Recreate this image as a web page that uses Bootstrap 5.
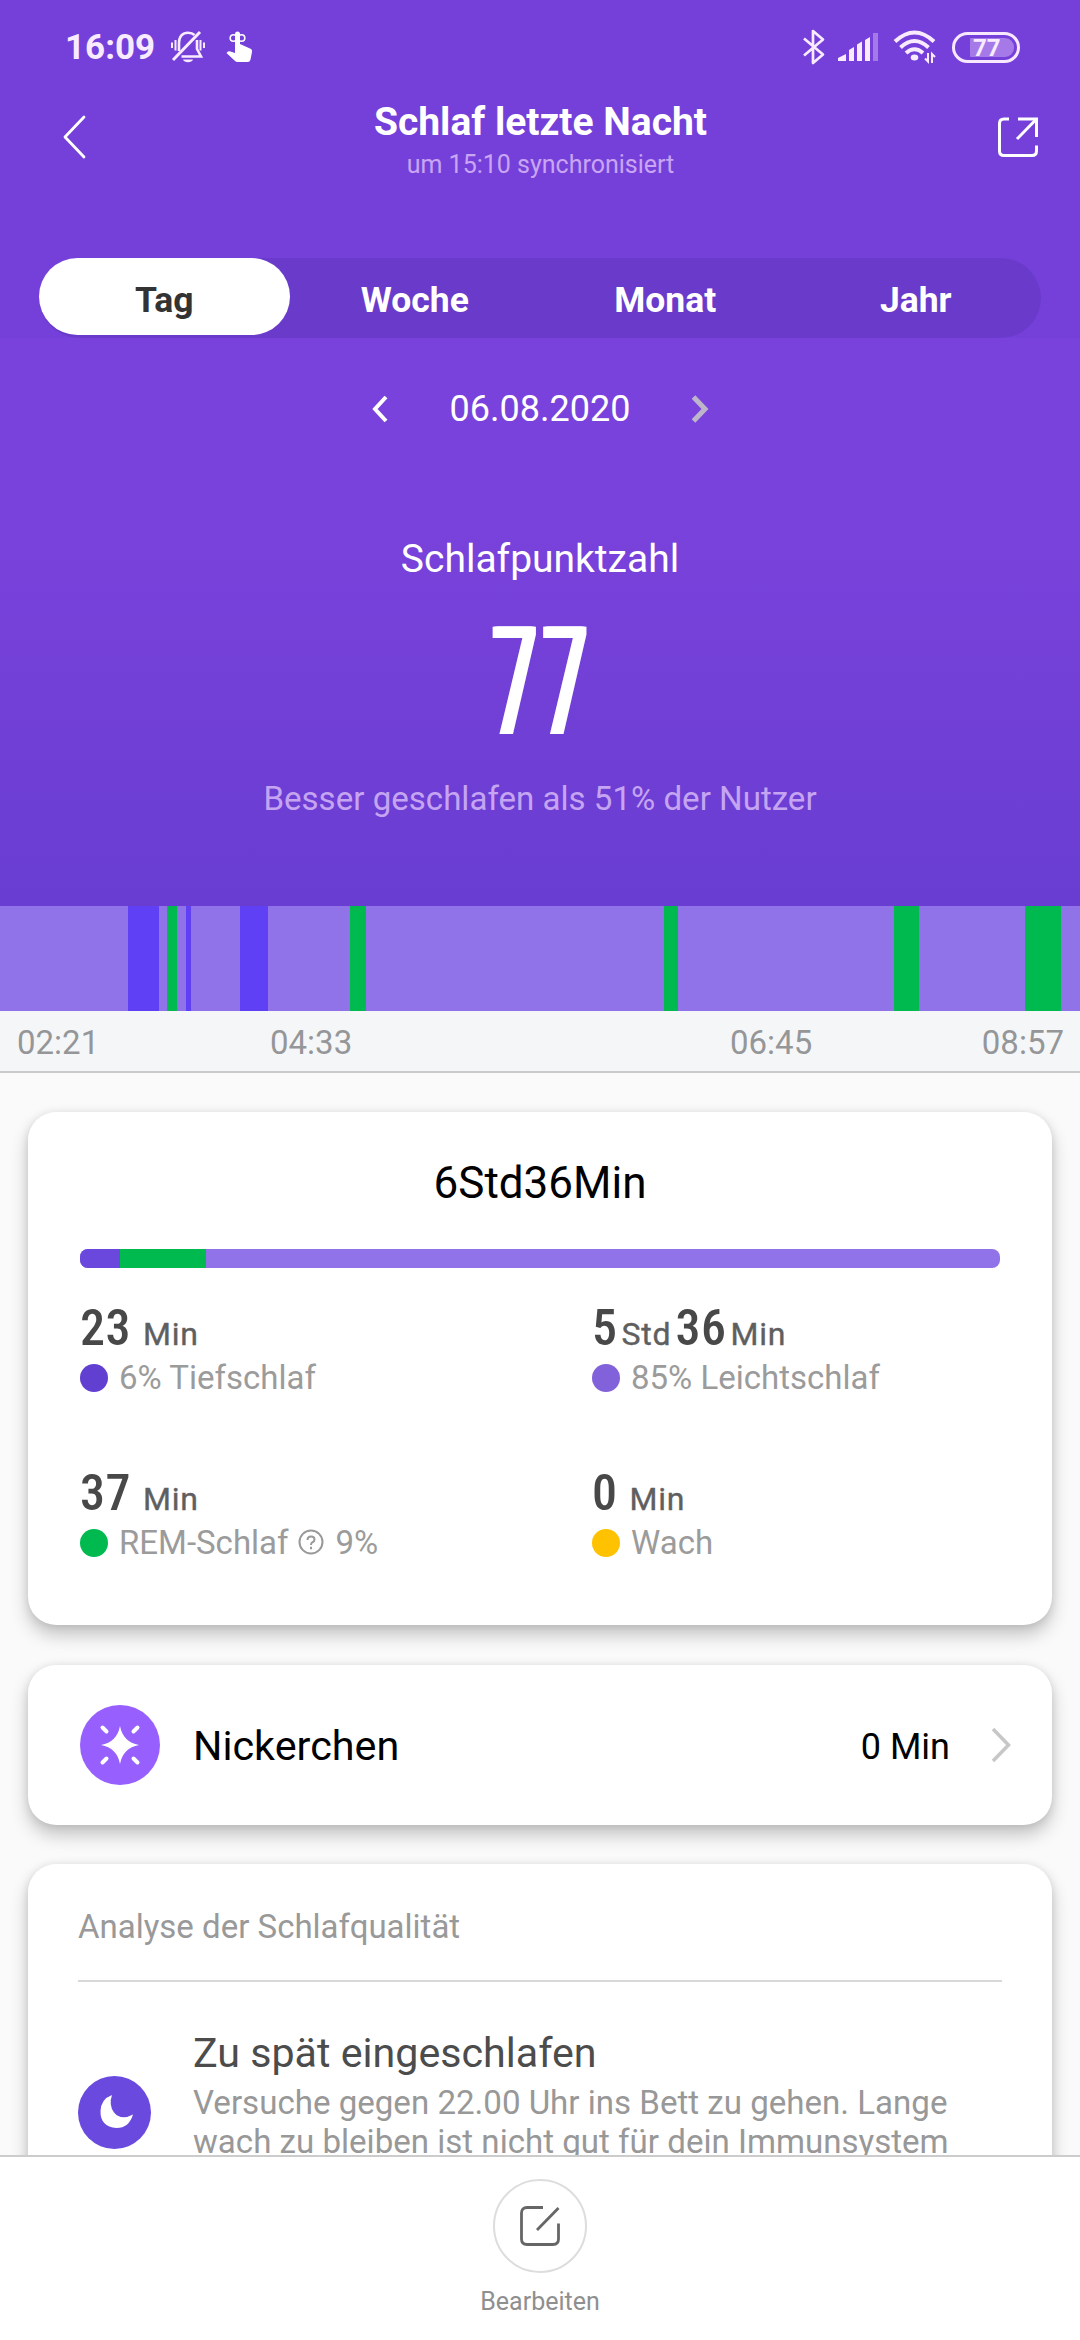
<!DOCTYPE html>
<html lang="de">
<head>
<meta charset="utf-8">
<meta name="viewport" content="width=device-width, initial-scale=1">
<title>Schlaf letzte Nacht</title>
<link href="https://cdn.jsdelivr.net/npm/bootstrap@5.3.0/dist/css/bootstrap.min.css" rel="stylesheet">
<style>
  body { font-family: Roboto, "Liberation Sans", sans-serif; font-size: 33px; background: #fafafa; color: #000; }
  .screen { width: 1080px; height: 2340px; }
  svg { display: block; flex: none; }

  /* Purple header */
  .hero { height: 906px; color: #fff; background: linear-gradient(#7540d9 0 338px, #7a42dc 338px, #7a42dc 500px, #693dd1 906px); }
  .statusbar { height: 94px; padding: 0 60px 0 65px; color: #f8ebff; }
  .clock { font-size: 35px; font-weight: 700; line-height: 94px; margin-right: 16px; padding-top: 1px; }
  .battery { width: 68px; height: 31px; border: 3px solid #f8e8ff; border-radius: 16px; padding: 3px; margin-left: 15px; }
  .battery-level { width: 44px; height: 19px; border-radius: 1px 9px 9px 1px; background: #a57ae8; font-size: 24px; font-weight: 700; line-height: 20px; padding-left: 3px; }
  .appbar { height: 92px; padding: 0 42px 0 62px; }
  .appbar svg { margin-bottom: 7px; }
  .app-heading { margin-right: 19px; padding-top: 1px; }
  .app-title { font-size: 39px; font-weight: 700; line-height: 48px; margin: 0; }
  .app-sub { font-size: 25px; line-height: 38px; color: #c9a5f3; }
  .period { margin: 72px 39px 0; height: 80px; border-radius: 40px; background: #6a3bca; }
  .period .nav-link { height: 77px; padding: 4px 0 0; border-radius: 39px; font-size: 35.5px; font-weight: 700; line-height: 77px; color: #fff; }
  .period .nav-link.active { background: #fff; color: #333; }
  .date-row { height: 60px; margin-top: 41px; gap: 61px; font-size: 36px; line-height: 60px; }
  .score-title { margin-top: 90px; font-size: 39px; line-height: 60px; }
  .score { margin-top: 19px; font-family: "Roboto Condensed", Roboto, sans-serif; font-size: 150px; font-weight: 400; line-height: 150px; transform: scaleX(.625); letter-spacing: 7px; text-indent: 6px; text-shadow: 2px 0, -2px 0, 4px 0, -4px 0; }
  .score-note { margin-top: 16px; font-size: 33.1px; line-height: 50px; color: #c5a5f2; }

  /* Sleep phase timeline */
  .timeline { height: 105px; background: #9073e9; }
  .deep { background: #5f40f5; }
  .rem { background: #00ba50; }
  .axis { height: 62px; background: #f5f6f8; border-bottom: 2px solid #c9cacc; color: #959698; line-height: 60px; padding: 2px 16px 0 17px; }
  .axis span:nth-child(1) { width: 253px; }
  .axis span:nth-child(2) { width: 460px; }

  /* Cards */
  .panel { width: 1024px; margin: 0 auto; background: #fff; border: 0; border-radius: 28px; box-shadow: 0 10px 18px rgba(0,0,0,.22), 0 1px 8px rgba(0,0,0,.1); }
  .summary { height: 513px; margin-top: 39px; padding: 40px 52px 0; }
  .total { font-size: 44px; line-height: 62px; height: 60px; text-align: center; }
  .phasebar { height: 19px; margin-top: 37px; border-radius: 8px; background: #9073e9; }
  .phasebar .deep { background: #6b48dd; }
  .stats { margin-top: 30px; }
  .stat { width: 512px; height: 165px; }
  .amount { height: 57px; line-height: 60px; color: #484848; font-family: "Roboto Condensed", Roboto, sans-serif; font-size: 50px; font-weight: 500; letter-spacing: .5px; white-space: pre; }
  .amount .unit { font-family: Roboto, sans-serif; font-size: 32px; font-weight: 400; letter-spacing: .8px; color: #5f5f5f; -webkit-text-stroke: .4px; line-height: 1; }
  .legend { height: 33px; margin-top: 6px; line-height: 33px; color: #9b9b9b; }
  .dot { width: 28px; height: 28px; border-radius: 50%; margin-right: 11px; }
  .nap { height: 160px; margin-top: 40px; padding: 0 41px 0 52px; }
  .nap-title { font-size: 41.3px; margin-left: 33px; padding-top: 3px; }
  .nap-value { font-size: 36px; margin-right: 41px; padding-top: 3px; }
  .quality { height: 340px; margin-top: 39px; padding: 35px 50px 0; border-radius: 28px 28px 0 0; }
  .quality-title { height: 81px; line-height: 55px; color: #999; }
  .advice { border-top: 2px solid #d8d8d8; padding-top: 46px; }
  .advice-icon { margin: 48px 42px 0 0; }
  .advice-title { font-size: 41.2px; line-height: 50px; color: #4c4c4c; }
  .advice-text { font-size: 33.1px; line-height: 39px; color: #989898; white-space: nowrap; padding-top: 5px; }

  /* Bottom action */
  .bottombar { height: 185px; background: #fff; border-top: 2px solid #ccc; padding-top: 22px; }
  .round-btn { width: 94px; height: 94px; border: 2px solid #ddd; border-radius: 50%; }
  .btn-label { font-size: 25px; line-height: 34px; margin-top: 12px; color: #8f8f8f; }
</style>
</head>
<body>
<div class="screen d-flex flex-column overflow-hidden">
  <header class="hero flex-shrink-0 text-center">
    <div class="statusbar d-flex align-items-center justify-content-between">
      <div class="d-flex align-items-center">
        <span class="clock">16:09</span>
        <svg width="34" height="34" viewBox="0 0 34 34" fill="none" stroke="#f8ebff" stroke-width="2.6">
          <path d="M8 21V13C8 6.500 11.500 2.800 17 2.800C19.500 2.800 22 3.500 23.500 5M26 10V19L30 26.500H10.500"/>
          <path d="M2 30L29 2" stroke-width="3"/>
          <path d="M12 29.500H22C21 33 13 33 12 29.500Z" fill="#f8ebff" stroke="none"/>
          <path d="M1 12.500V18M4.500 10V20.500M29.500 10V20.500M33 12.500V18" stroke-width="2"/>
        </svg>
        <svg class="ms-3" width="36" height="34" viewBox="0 0 36 34">
          <circle cx="12.500" cy="8" r="3.300" fill="none" stroke="#fff" stroke-width="1.600"/>
          <circle cx="20.500" cy="8" r="3.300" fill="none" stroke="#fff" stroke-width="1.600"/>
          <path fill="#fff" d="M14 4a2.500 2.500 0 0 1 5 0V14L29 18.500Q31.500 19.500 31 22L29.500 29.500Q29 32 26.500 32H17Q15 32 13.500 30.500L5.500 23L7 21.500Q8 21 9.500 21.500L14 23Z"/>
        </svg>
      </div>
      <div class="d-flex align-items-center">
        <svg width="22" height="36" viewBox="0 0 22 36" fill="none" stroke="#f8ebff" stroke-width="2.700" stroke-linejoin="round"><path d="M1 9.500L20 25.500L10 34V2L20 10.500L1 26.500"/></svg>
        <svg class="ms-2" width="60" height="34" viewBox="0 0 60 34"><g transform="translate(5 0)" fill="#f8ebff"><path d="M0 28L8 24V31H0ZM11 20L16 17V31H11ZM19 14.500L24 11.500V31H19ZM27 10L32 7V31H27Z"/><path fill="#a57ae8" d="M35 3H40V31H35Z"/></g></svg>
        <svg width="44" height="36" viewBox="0 0 44 36" fill="none" stroke="#f8ebff" stroke-width="4">
          <path d="M2 12.500Q21.500 -5.500 41 12.500M7.500 18.500Q21.500 5.500 35.500 18.500M13 24Q21.500 16.500 30 24"/>
          <ellipse cx="21.500" cy="28.500" rx="3.800" ry="3" fill="#f8ebff" stroke="none"/>
          <path d="M35 24V32.500L32 29.500M39 34V25L42 28" stroke-width="2"/>
        </svg>
        <div class="battery d-flex justify-content-end"><div class="battery-level text-start">77</div></div>
      </div>
    </div>
    <div class="appbar d-flex align-items-center justify-content-between">
      <svg width="40" height="44" viewBox="0 0 40 44" fill="none" stroke="#fff" stroke-width="2.800" stroke-linecap="round" stroke-linejoin="round"><path d="M22 2L3 22L22 42"/></svg>
      <div class="app-heading">
        <h1 class="app-title">Schlaf letzte Nacht</h1>
        <div class="app-sub">um 15:10 synchronisiert</div>
      </div>
      <svg width="40" height="40" viewBox="0 0 40 40" fill="none" stroke="#fff" stroke-width="3"><path d="M11 2H6Q1.500 2 1.500 6.500V34Q1.500 38.500 6 38.500H34Q38.500 38.500 38.500 34V28.500M20 2H38.500V20"/><path d="M38 2.500L19 22"/></svg>
    </div>
    <nav class="period nav nav-pills nav-fill">
      <div class="nav-item w-25"><a class="nav-link active">Tag</a></div>
      <div class="nav-item w-25"><a class="nav-link">Woche</a></div>
      <div class="nav-item w-25"><a class="nav-link">Monat</a></div>
      <div class="nav-item w-25"><a class="nav-link">Jahr</a></div>
    </nav>
    <div class="date-row d-flex align-items-center justify-content-center">
      <svg width="18" height="28" viewBox="0 0 18 28" fill="none" stroke="#fff" stroke-width="4"><path d="M15 2L4 14L15 26"/></svg>
      <span>06.08.2020</span>
      <svg width="18" height="28" viewBox="0 0 18 28" fill="none" stroke="#bdb5c9" stroke-width="5"><path d="M2.500 2L14 14L2.500 26"/></svg>
    </div>
    <div class="score-title">Schlafpunktzahl</div>
    <div class="score">77</div>
    <div class="score-note">Besser geschlafen als 51% der Nutzer</div>
  </header>

  <div class="timeline d-flex flex-shrink-0">
    <div class="deep" style="width:31px;margin-left:128px"></div>
    <div class="rem" style="width:10px;margin-left:8px"></div>
    <div class="deep" style="width:5px;margin-left:9px"></div>
    <div class="deep" style="width:28px;margin-left:49px"></div>
    <div class="rem" style="width:16px;margin-left:82px"></div>
    <div class="rem" style="width:14px;margin-left:298px"></div>
    <div class="rem" style="width:25px;margin-left:216px"></div>
    <div class="rem" style="width:36px;margin-left:106px"></div>
  </div>
  <div class="axis d-flex flex-shrink-0">
    <span>02:21</span><span>04:33</span><span>06:45</span><span class="ms-auto">08:57</span>
  </div>

  <main class="flex-grow-1 overflow-hidden">
    <section class="panel summary">
      <div class="total">6Std36Min</div>
      <div class="phasebar d-flex overflow-hidden">
        <div class="deep" style="width:40px"></div>
        <div class="rem" style="width:86px"></div>
      </div>
      <div class="stats d-flex flex-wrap">
        <div class="stat">
          <div class="amount">23 <span class="unit">Min</span></div>
          <div class="legend d-flex align-items-center"><span class="dot" style="background:#613fd0"></span>6% Tiefschlaf</div>
        </div>
        <div class="stat w-auto">
          <div class="amount">5<span class="unit mx-1">Std</span>36<span class="unit ms-1">Min</span></div>
          <div class="legend d-flex align-items-center"><span class="dot" style="background:#8262da"></span>85% Leichtschlaf</div>
        </div>
        <div class="stat">
          <div class="amount">37 <span class="unit">Min</span></div>
          <div class="legend d-flex align-items-center"><span class="dot" style="background:#00ba50"></span>REM-Schlaf
            <svg class="ms-2" width="27" height="27" viewBox="0 0 27 27" fill="none" stroke="#999" stroke-width="2"><circle cx="14" cy="13" r="11.500"/><path d="M10.500 11Q10.500 7.500 14 7.500Q17.500 7.500 17.500 10.500Q17.500 12.500 15.500 13.200Q14 14 14 16M14 17.800V20.200"/></svg>
            <span class="ms-2 ps-1">9%</span></div>
        </div>
        <div class="stat w-auto">
          <div class="amount">0 <span class="unit">Min</span></div>
          <div class="legend d-flex align-items-center"><span class="dot" style="background:#fec200"></span>Wach</div>
        </div>
      </div>
    </section>

    <section class="panel nap d-flex align-items-center">
      <svg width="80" height="80" viewBox="0 0 80 80"><circle cx="40" cy="40" r="40" fill="#975ffd"/><path fill="#fff" d="M40 21Q43 37 59 40Q43 43 40 59Q37 43 21 40Q37 37 40 21Z"/><path d="M22.500 22.500L26.500 26.500M57.500 22.500L53.500 26.500M22.500 57.500L26.500 53.500M57.500 57.500L53.500 53.500" stroke="#fff" stroke-width="4" stroke-linecap="round"/></svg>
      <span class="nap-title">Nickerchen</span>
      <span class="nap-value ms-auto">0 Min</span>
      <svg width="20" height="36" viewBox="0 0 20 36" fill="none" stroke="#c7c7c7" stroke-width="3.500"><path d="M2 2L17.500 18L2 34"/></svg>
    </section>

    <section class="panel quality">
      <div class="quality-title">Analyse der Schlafqualität</div>
      <div class="advice d-flex align-items-start">
        <svg class="advice-icon" width="73" height="73" viewBox="0 0 73 73"><circle cx="36.500" cy="36.500" r="36.500" fill="#6a49de"/><path fill="#fff" d="M34 19Q30.500 29 36 36.500Q43 45 55 38.500Q51 52 38.500 52Q22 50.500 22.500 35Q23 23 34 19Z"/></svg>
        <div>
          <div class="advice-title">Zu spät eingeschlafen</div>
          <div class="advice-text">Versuche gegen 22.00 Uhr ins Bett zu gehen. Lange<br>wach zu bleiben ist nicht gut für dein Immunsystem</div>
        </div>
      </div>
    </section>
  </main>

  <footer class="bottombar d-flex flex-column align-items-center flex-shrink-0">
    <div class="round-btn d-flex align-items-center justify-content-center">
      <svg width="40" height="40" viewBox="0 0 40 40" fill="none" stroke="#666" stroke-width="2.800"><path d="M23 1.500H7Q1.500 1.500 1.500 7V33Q1.500 38.500 7 38.500H33Q38.500 38.500 38.500 33V17.500"/><path d="M38.500 2L17 24"/></svg>
    </div>
    <div class="btn-label">Bearbeiten</div>
  </footer>
</div>
<script src="https://cdn.jsdelivr.net/npm/bootstrap@5.3.0/dist/js/bootstrap.bundle.min.js"></script>
</body>
</html>
